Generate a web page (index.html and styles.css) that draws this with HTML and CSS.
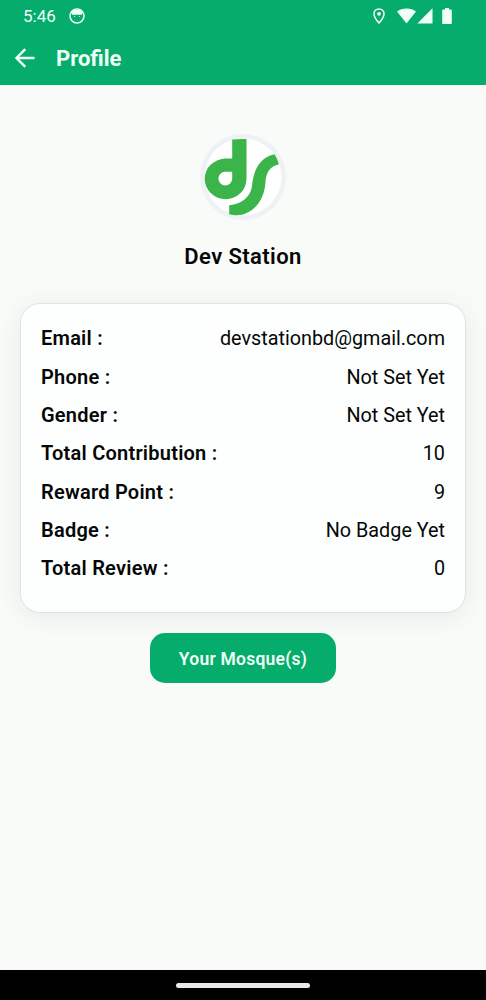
FILE: index.html
```html
<!DOCTYPE html>
<html lang="en">
<head>
<meta charset="utf-8">
<title>Profile</title>
<link rel="stylesheet" href="styles.css">
</head>
<body>
<div class="screen">
  <header class="top">
    <div class="status">
      <span class="clock">5:46</span>
      <svg class="app-icon" width="16" height="16" viewBox="0 0 16 16"><circle cx="8" cy="8" r="7" fill="none" stroke="currentColor" stroke-width="1.500"/><path d="M3.600 1.800 5.500 2h5l1.900-.200 1.300 2.600-1 2.600-1.500-.600-1.300.600-2-.500-2 .500-1.400-.600-1.300.600-1-2.600Z" fill="currentColor"/><circle cx="5.600" cy="8.500" r=".55" fill="currentColor"/><circle cx="10.400" cy="8.500" r=".55" fill="currentColor"/></svg>
      <span class="space"></span>
      <svg class="pin" width="12" height="16" viewBox="0 0 12 16"><path d="M6 .9C3.1.9 1 3.1 1 5.9c0 3.500 5 9 5 9s5-5.500 5-9c0-2.800-2.100-5-5-5Z" fill="none" stroke="currentColor" stroke-width="1.500"/><circle cx="6" cy="5.800" r="1.900" fill="currentColor"/></svg>
      <svg class="wifi" width="19" height="16" viewBox="0 0 19 16"><path d="M9.500 15.500 0 3.600C2.500 1.600 5.800.500 9.500.500s7 1.100 9.500 3.100Z" fill="currentColor"/></svg>
      <svg class="signal" width="16" height="16" viewBox="0 0 16 16"><path d="M15.500.300v15.200H.300Z" fill="currentColor"/></svg>
      <svg class="battery" width="10" height="16" viewBox="0 0 10 16"><path d="M3 0h4v1.500h1.700c.700 0 1.100.500 1.100 1.100v12.300c0 .600-.500 1.100-1.100 1.100H1.300C.700 16 .200 15.500.200 14.900V2.600c0-.600.400-1.100 1.100-1.100H3Z" fill="currentColor"/></svg>
    </div>
    <div class="appbar">
      <svg class="back" width="20" height="20" viewBox="0 0 20 20"><path d="M19.500 10H1.800M10.300 1.200 1.500 10l8.800 8.800" fill="none" stroke="currentColor" stroke-width="2.400"/></svg>
      <h1 class="title">Profile</h1>
    </div>
  </header>
  <main class="content">
    <div class="avatar">
      <svg width="86" height="86" viewBox="0 0 86 86">
        <circle cx="43" cy="43" r="43" fill="#eff2f4"/>
        <circle cx="43" cy="43" r="38.500" fill="#fff"/>
        <path d="M32.200 5.600Q39 4.600 46.500 5V44.600A20.900 20.300 0 1 1 25.600 24.600H32.200ZM25.300 37.700A6.900 6.900 0 1 0 32.200 44.600V37.700Z" fill="#3bb54a" fill-rule="evenodd"/>
        <path d="M74.500 20.300Q77.500 25 79 30.300C70 32 66 39 65.500 48C64.500 67 52 82 35 81.300Q31.500 81 29.200 80.300V71.300C42 70 50.500 63 52 52C53 41 57 24 74.500 20.300Z" fill="#3bb54a"/>
      </svg>
    </div>
    <h2 class="name">Dev Station</h2>
    <dl class="card">
      <div class="row"><dt>Email :</dt><dd>devstationbd@gmail.com</dd></div>
      <div class="row"><dt>Phone :</dt><dd>Not Set Yet</dd></div>
      <div class="row"><dt>Gender :</dt><dd>Not Set Yet</dd></div>
      <div class="row"><dt>Total Contribution :</dt><dd>10</dd></div>
      <div class="row"><dt>Reward Point :</dt><dd>9</dd></div>
      <div class="row"><dt>Badge :</dt><dd>No Badge Yet</dd></div>
      <div class="row"><dt>Total Review :</dt><dd>0</dd></div>
    </dl>
    <button class="button" type="button">Your Mosque(s)</button>
  </main>
  <footer class="navbar"><span class="handle"></span></footer>
</div>
</body>
</html>
```

FILE: styles.css
```css
* { box-sizing: border-box; }
body { margin: 0; font-family: Roboto, sans-serif; color: #050706; }
h1, h2, dl, dt, dd { margin: 0; }
svg { display: block; flex: none; }

.screen { width: 486px; height: 1000px; display: flex; flex-direction: column; background: #f8fbf7; }

.top { height: 85px; flex: none; background: #05ac6b; color: #f0fff8; }
.status { height: 31px; padding: 0 34px 0 23px; display: flex; align-items: center; }
.clock { font-size: 17px; line-height: 30px; }
.app-icon { margin-left: 13px; }
.space { flex: 1; }
.wifi { margin-left: 12px; }
.signal { margin-left: 1px; }
.battery { margin-left: 9px; }
.appbar { height: 54px; padding-left: 15px; display: flex; align-items: center; }
.title { margin-left: 21px; padding-top: 2px; font-size: 22px; line-height: 26px; font-weight: 700; }

.content { flex: 1; display: flex; flex-direction: column; align-items: center; padding-top: 49px; }
.avatar { height: 86px; }
.name { margin-top: 22px; font-size: 22px; line-height: 30px; font-weight: 600; letter-spacing: .4px; }
.card {
  width: 446px; height: 310px; margin-top: 31px; padding: 15.300px 20px;
  background: #fdfffe; border: 1px solid #dfe3e2; border-radius: 20px;
  box-shadow: 0 4px 24px rgba(70, 80, 90, .09);
}
.row { height: 38.330px; line-height: 38.330px; display: flex; justify-content: space-between; align-items: baseline; font-size: 20px; }
.row dt { font-weight: 600; letter-spacing: .240px; }
.row dd { font-size: 19.800px; }
.button {
  width: 186px; height: 50px; margin-top: 20px; padding: 1px 0 0; border: 0; border-radius: 15px;
  background: #05ac6b; color: #f0fff8; font: 600 17.500px Roboto, sans-serif; letter-spacing: .240px;
}
.navbar { height: 30px; flex: none; display: flex; justify-content: center; align-items: center; background: #000; }
.handle { width: 134px; height: 5px; border-radius: 3px; background: #e8e8e8; }
```
